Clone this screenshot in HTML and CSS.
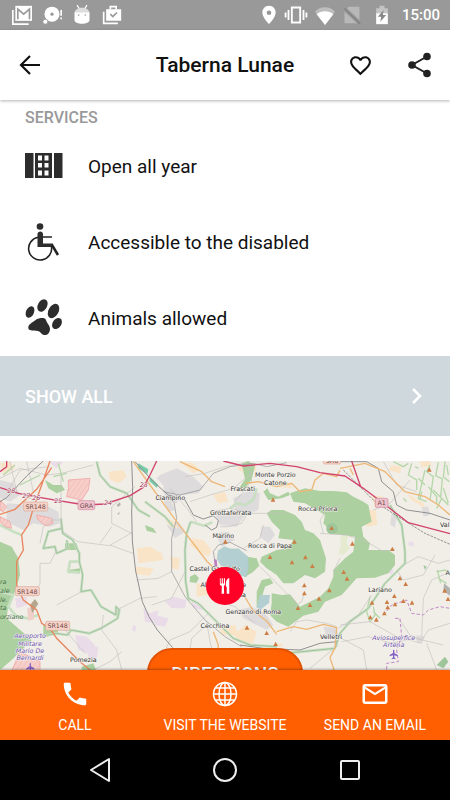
FILE: index.html
```html
<!DOCTYPE html>
<html lang="en">
<head>
    <meta charset="UTF-8">
    <meta name="viewport" content="width=device-width, initial-scale=1.0">
    <title>Taberna Lunae</title>
    <link rel="stylesheet" href="styles.css">
</head>
<body>
    <div class="status-bar">
        <div class="status-left">
            <svg class="status-icon" viewBox="0 0 24 24"><path fill="#fff" d="M0 6v18h20v-2H2V6z"/><path fill="#fff" d="M4 1h20v18H4z"/><path fill="none" stroke="#999" stroke-width="2" d="M7 17V5l7 6 7-6v12"/></svg>
            <svg class="status-icon" viewBox="0 0 24 24"><circle cx="12" cy="11" r="9" fill="#fff"/><circle cx="12" cy="11" r="2" fill="#999"/><circle cx="4" cy="20" r="3" fill="#fff" stroke="#999"/><path stroke="#fff" stroke-width="2" d="M23 6v7M23 15v2"/></svg>
            <svg class="status-icon" viewBox="0 0 24 24"><path stroke="#fff" stroke-width="1.500" d="M6 0l3 5M18 0l-3 5"/><path fill="#ddd" d="M3 10c0-9 18-9 18 0z"/><path fill="#fff" d="M3 9h18v9c0 6-18 6-18 0z"/><circle cx="8" cy="12" r="1" fill="#999"/><circle cx="16" cy="12" r="1" fill="#999"/></svg>
            <svg class="status-icon" viewBox="0 0 24 24"><path fill="#fff" d="M1 8v15h18v-2H3V8zM5 5h18v14H5z"/><path fill="none" stroke="#fff" stroke-width="2" d="M10 5V2h7v3"/><path fill="none" stroke="#999" stroke-width="2" d="M10 11l3 3 5-5"/></svg>
        </div>
        <div class="status-right">
            <svg class="status-icon" viewBox="0 0 24 24"><path fill="#fff" fill-rule="evenodd" d="M12 1C7.500 1 4 4.500 4 9c0 6 8 14 8 14s8-8 8-14c0-4.500-3.500-8-8-8zm0 5.500a2.800 2.800 0 1 1 0 5.600 2.800 2.800 0 0 1 0-5.600z"/></svg>
            <svg class="status-icon wide" viewBox="0 0 28 24"><path fill="none" stroke="#fff" stroke-width="2.200" d="M9 3h10v18H9zM5 6v12M1.500 9v6M23 6v12M26.500 9v6"/></svg>
            <svg class="status-icon wide" viewBox="0 0 28 24"><path fill="#bdbdbd" d="M14 24L2 8C8 1 20 1 26 8z"/><path fill="#fff" d="M14 24L4 11c6-4.500 14-4.500 20 0z"/></svg>
            <svg class="status-icon" viewBox="0 0 24 24"><path fill="#b8b8b8" d="M8 2h13v16L6 4zM3 8l15 14H3z"/><path stroke="#7d7d7d" stroke-width="1.500" d="M3 4l19 19"/></svg>
            <svg class="status-icon battery" viewBox="0 0 24 24"><path fill="#c4c4c4" d="M9 1h6v3h4v7H5V4h4z"/><path fill="#fff" d="M5 10h14v13H5z"/><path fill="#888" d="M14 6l-7 8h4l-1 6 7-8h-4z"/></svg>
            <span class="clock">15:00</span>
        </div>
    </div>

    <header class="header">
        <button class="icon-button" aria-label="Back">
            <svg width="24" height="24" viewBox="0 0 24 24"><path fill="none" stroke="#111" stroke-width="2.200" d="M22 12H3M12 3l-9 9 9 9"/></svg>
        </button>
        <h1>Taberna Lunae</h1>
        <div class="header-actions">
            <button class="icon-button" aria-label="Add to favourites">
                <svg width="25" height="25" viewBox="0 0 24 24"><path fill="#111" d="M16.500 3c-1.740 0-3.410.810-4.500 2.090C10.910 3.810 9.240 3 7.500 3 4.420 3 2 5.420 2 8.500c0 3.780 3.400 6.860 8.550 11.540L12 21.350l1.450-1.320C18.600 15.360 22 12.280 22 8.500 22 5.420 19.580 3 16.500 3zm-4.400 15.550l-.1.100-.1-.1C7.140 14.240 4 11.390 4 8.500 4 6.500 5.500 5 7.500 5c1.540 0 3.040.990 3.570 2.360h1.870C13.460 5.990 14.960 5 16.500 5c2 0 3.500 1.500 3.500 3.500 0 2.890-3.140 5.740-7.900 10.050z"/></svg>
            </button>
            <button class="icon-button" aria-label="Share">
                <svg width="26" height="26" viewBox="0 0 26 26"><path fill="none" stroke="#222" stroke-width="2" d="M20 4.500L5 13l15 8.500"/><circle cx="20" cy="4.500" r="3.800" fill="#222"/><circle cx="5" cy="13" r="3.800" fill="#222"/><circle cx="20" cy="21.500" r="3.800" fill="#222"/></svg>
            </button>
        </div>
    </header>

    <main class="content">
        <h2 class="section-title">SERVICES</h2>
        <ul class="services">
            <li>
                <svg class="service-icon" viewBox="0 0 38 38"><path fill="#2d2d2d" fill-rule="evenodd" d="M0 6h8.500v25H0zM29 6h8.500v25H29zM10 6h17v25H10zm3 2.500v5h4v-5zm6.500 0v5h4v-5zM13 16v4.500h4V16zm6.500 0v4.500h4V16zM13 23.500v5h4v-5zm6.500 0v5h4v-5z"/></svg>
                <span>Open all year</span>
            </li>
            <li>
                <svg class="service-icon" viewBox="0 0 38 38"><circle cx="15" cy="3.500" r="3.300" fill="#2d2d2d"/><path fill="#2d2d2d" d="M12.500 11c0-3.500 5.500-3.500 5.500 0v9.500h10V24H12.500z"/><path fill="none" stroke="#222" stroke-width="1.600" d="M18 14h9M13 14.200a11.500 11.500 0 1 0 13.500 9.500"/><path stroke="#222" stroke-width="2.500" d="M27 22l6 10"/></svg>
                <span>Accessible to the disabled</span>
            </li>
            <li>
                <svg class="service-icon" viewBox="0 0 38 38"><g fill="#2d2d2d"><ellipse cx="5" cy="13" rx="4" ry="6" transform="rotate(25 5 13)"/><ellipse cx="17.500" cy="6.500" rx="4.600" ry="6.600" transform="rotate(30 17.500 6.500)"/><ellipse cx="28.500" cy="12" rx="5" ry="7.700" transform="rotate(30 28.500 12)"/><ellipse cx="32" cy="24.500" rx="4.300" ry="6" transform="rotate(35 32 24.500)"/><path d="M12 20c3-1 8-2 9 1 1 4 4 5 4 9 0 6-6 8-9 4-3-4-11-1-12.500-4-1.500-5 4-6 8.500-10z"/></g></svg>
                <span>Animals allowed</span>
            </li>
        </ul>

        <button class="show-all">
            <span>SHOW ALL</span>
            <svg width="12" height="18" viewBox="0 0 12 18"><path fill="none" stroke="#fff" stroke-width="2.500" d="M2 2l7 7-7 7"/></svg>
        </button>

        <section class="map" aria-label="Map">
            <svg class="map-canvas" viewBox="0 18 1350 780" preserveAspectRatio="xMidYMin slice">
                <defs>
                    <path id="peak" fill="#cb7d43" d="M0-7l7 13H-7z"/>
                    <path id="plane" fill="#8461c4" d="M-2-12q2-4 4 0v8l10 6v4l-10-3v6l4 4v2l-6-2-6 2v-2l4-4V3l-10 3V2l10-6z"/>
                    <pattern id="hatch" width="12" height="12" patternUnits="userSpaceOnUse" patternTransform="rotate(35)"><path fill="#f6cfca" d="M0 0h12v12H0z"/><path stroke="#f0a29f" stroke-width="2" d="M0 0v12"/></pattern>
                </defs>
                <rect y="18" width="1350" height="780" fill="#f1eee8"/>

                <!-- built-up areas -->
                <g fill="#dddbdc">
                    <path d="M20 145l70 5 45 0 40 20 5 35-30 10-50-10-30 20-50-25z"/>
                    <path d="M480 60l50-20 50 25 30 30-15 20-50 5-15 25-35-10-5-45-20-20zM490 135l25 5 10 25-20 5zM500 210l35-10 20 30-30 20z"/>
                    <path d="M700 130l50-25 30 10-5 50-40 15-30-15zM640 165l45 10 50 5-25 35-50-5zM645 235l40-5 20 25-40 20zM785 215l25 0 15 25-20 25-25-20zM715 465l40-10 40 20 25 35-20 15-40-20-30-15zM970 515l40 5 5 20-35 5zM0 75l40 10 20 35-30 20-30-10z"/>
                    <path d="M1175 175l15 5-5 38-15-10zM1265 155l20 0 5 25-20 5zM1250 540l25 5-10 20-15-5z"/>
                </g>
                <g fill="#fae4c8">
                    <path d="M0 25l30-5 15 20-35 20zM325 50l45-5 10 20-25 20-25-10zM410 280l40-5 35 20 5 20-75 10zM410 335l50 5-10 22-45-5zM490 185l35 15 10 20-25-5zM575 250l35 5 25 30-10 20-20-10-35-25zM590 385l30 5 5 30-35 5zM650 500l20 15 35-5 10 30-50 0zM540 20l40 5 20 20-20 10zM640 120l35-10 10 30-30 5zM510 305l30 5-5 35-20-5z"/>
                    <path d="M710 40l25-20 30 5 5 20-30 15zM830 75l45 10 0 15-40-5zM1065 145l35 5 5 25-20 10-20-20zM1105 165l22 0 5 45-32 5-5-25zM1115 120l35 5 0 30-25 5zM1175 30l30 5-5 20-35-10zM1220 115l50 30 5 15-40-25zM1260 20l30-2 5 15-30 5zM700 540l35-30 35 20-10 35-30 0zM800 575l45-10 0 10-40 5z"/>
                </g>
                <g fill="#e9dbe8">
                    <path d="M225 540l35 5 25 25-10 30-40-15zM265 575l30 0-5 35-25 0zM430 460l20 15 25-10-5 40-35-5zM465 480l40 10-10 25-30-5zM495 440l25-15 40 10-5 25-40 0zM400 510l10 5-5 15-10-5zM575 440l35 10 0 15-30-5zM45 430l35-5 0 25-30 10zM145 20l45 0-20 20zM1225 260l15 0 0 15-15-5zM1160 335l20 10-5 15-15-10z"/>
                </g>

                <!-- woods -->
                <g fill="#acd09f">
                    <path d="M0 260l35 15 20 35 5 50-15 50-20 40-5 40 75 65-60 60-35 30z"/>
                    <path d="M135 75l25 15 25 0 10 15-25 10-25-15zM195 265l35 0 5 20-40 0zM205 345l35-5 0 12-35 3zM130 510l40 0 5 25-45 5z"/>
                    <path d="M725 25l20-7 20 15-10 40-25 35-15-5 20-30z"/>
                    <path d="M815 165l35 0 35 15 20 20 10 25 25 10 20 20 18 55-3 40-30 20-30-10-35 25-30 0-20-25-30-20-20-20 5-15 45-20 35-5 15-25-45-5 5-25-25-25-15-25z"/>
                    <path d="M742 305l28 5 8 22-20 20-25 15 10-45zM770 410l15-35 25-5 10 15-25 10-15 50-10 15zM815 415l30 5 25-2 30 37 60-30 25-25 15-35 0-20 35-35 25-20 5-45-65-8-30-32 5-25-25-15-35-20-35-5-10-25 45-15 45 8 40 0 40 4 20 13 30 15 15 10 10 50-30 15 5 30 20 20-5 20 60 0 20 15 0 30-20 25-40 13-55 2-45 50-50 20-20 30-45 12-45 33-35-15-20-20 5-35z"/>
                    <path d="M790 110l12-10 8 15 25 10 30-15 5 10-25 10-40 5zM570 365l15-8 12 12-8 15-20-3zM245 635l35-10 10 25-45 0zM435 210l25 10 10 15-30-8z"/>
                    <path fill="#78cba9" d="M415 25l30 18-3 15-30-20zM450 65l25 25-5 8-22-20z"/>
                </g>
                <path fill="#e4ebce" d="M1020 245l25-5-5 25 10 15-20 20-15-5 8-25z"/>
                <g fill="#9fc69b">
                    <circle cx="996" cy="221" r="17"/><path d="M1310 630l25-25 10 15-15 20zM1270 330l10 5-5 10z"/>
                </g>
                <g fill="none" stroke="#b5d7a9" stroke-width="4">
                    <path d="M1235 25l-10 35 25 15 0 30M1255 70l20 20M1275 45l-20 85 25 10M1290 30l-10 20 20 15-10 70M1315 22l-8 40 20 10-5 55M1335 20l-5 45 18 15M1300 105l45 45M1110 425l-10 45 10 30 15-20-5-25M1120 470l20 20M1310 350l25-5 15 10M1315 370l25 15M1312 345l10 40"/>
                    <path d="M1330 100l15 45M1245 35l10 5M1210 130l10 10M10 60l35-30M60 90l60-30M175 25l15 55M160 65l40-10"/>
                    <path d="M1180 20l30 15 15-10M1265 110l-5 25M1285 95l25 30 0 20M1325 130l-15 30M1340 30l5 30"/>
                </g>

                <!-- lakes -->
                <path fill="#b4cfd1" stroke="#a9c8c8" stroke-width="2" d="M655 287l18-12 18 7 25 0 27 23 2 30-6 30-20-5-15-15-20-10-20-3-12-20z"/>
                <path fill="#b4cfd1" d="M780 420l30 0-3 25-15 10-12 12-10-12z"/>

                <!-- green park boundaries -->
                <g fill="none" stroke="#c8dfc2" stroke-width="8" stroke-linejoin="round">
                    <path d="M183 190l5 45 30 20 20 40 0 25 10 40-5 50 30-5 30 50 45 25 0-25 10 10-5 25-50 30-35 15-55-10-10 15-35-5-45 10"/>
                    <path d="M185 220l-40 10-15 50 35-5 5 20 35-15-5-25M235 320l-25 0-5 30 35 3M290 20l10 40 30 35 50 20 35 50 35 20M435 140l60 45 25 30"/>
                    <path d="M572 200l-12 35-5 50 2 95 8 50 30 15 45 45 60 60 50 20 80 5M0 410l40 10-15 35 25 30 35 5 30-10M0 210l40 20 25 10M572 200l40 12 25-10M1170 150l35 60 10 80 0 35-60 60-50 75-55 40-30 35-15 45-150 15M690 160l20-15 25 5 25-15 10-35"/>
                </g>
                <g fill="none" stroke="#8db58c" stroke-width="2">
                    <path d="M183 190l5 45 30 20 20 40 0 25 10 40-5 50 30-5 30 50 45 25 0-25 10 10-5 25-50 30-35 15-55-10-10 15-35-5-45 10M185 220l-40 10-15 50 35-5 5 20 35-15-5-25M290 20l10 40 30 35 50 20 35 50 35 20M435 140l60 45 25 30"/>
                    <path d="M572 200l-12 35-5 50 2 95 8 50 30 15 45 45 60 60 50 20 80 5M1170 150l35 60 10 80 0 35-60 60-50 75-55 40-30 35-15 45-150 15"/>
                </g>

                <path fill="url(#hatch)" stroke="#ee9b98" stroke-width="2" d="M205 75l65-5-5 35-20 30-45-10 5-25zM110 180l45 10 3 15-20 8-25-20zM0 135l20 20-10 15-10-5zM0 185l30 15 5 20-20-5-15-15zM60 590l60 30 0 28-85 0z"/>
                <path fill="#f1cfc9" d="M82 460l20-5 0 38-18 4z"/><path fill="#b5a78d" d="M90 450l15-18 10 14-18 28z"/>

                <!-- minor roads -->
                <g fill="none" stroke="#c4c2bf" stroke-width="2">
                    <path d="M0 70l60-30 80 20 45-5 95-25M30 20l20 90 60 30M80 20l20 90M20 115l40-70 90-10M183 60l0 165 50 35 95 12 70-40M185 195l-30 0-25 20-10 50M395 235l-60-30 0-50 70-60M300 265l35-50M330 270l40 15 30 10M170 285l-20 40-30 0 0 60-20 40M245 410l-75 40M340 480l20-20 60-30 50-5M310 480l-5 45 45 60 15 60M365 590l-35 30-50 25M150 500l45 25 60 70M410 375l65-5 40-20"/>
                    <path d="M455 450l60-20 40-80M470 645l40-90 60-25 60-60M510 100l50 60 30 40M555 65l60-10 60-20 60-10M570 140l60-20 70-20 60-50M640 170l50-10 60 15 110 0M660 215l25 0 40-10 20-35M780 335l110 110M645 340l20 40M620 400l40 40 45 15 60 50M620 500l10 60 20 75M625 505l-50 45-15 95M730 280l50-30 10-40M745 20l10 60-50 60M970 235l-10-40 20-30 60-20M960 235l80 5 60 20 50 30 35-8M1000 350l20-40M915 410l-10 30-35 25M870 530l20-30 30-5 60 10 30 10M1020 510l90-10 80 45 75 20M1015 520l60-40 40-60M1025 560l80-15 70 20 70-15 85 20M1210 330l45-25 60 20 35-10M1190 345l20 30 60-15 35-60M1265 545l5-115 25-55 45-20M1195 490l35 50 35 15 20-30 65-20M1280 565l30 80M1100 645l-10-60-75-40M1015 570l-85 70M1120 165l50-20 60-70M1150 20l40 70 60 20"/>
                </g>

                <!-- railways -->
                <g fill="none" stroke="#909090" stroke-width="3" stroke-linejoin="round">
                    <path d="M395 18l3 80-3 70 2 90 10 90 20 92 20 45 25 40 46 53M130 18l-50 45-60 65-20 12"/>
                    <path d="M405 20l55 60 45 40 50 15 25 45 30 12 30-10 15 15-5 20-15 8-20-15"/>
                    <path stroke-width="2" d="M520 130l10 60-15 60 0 100 40 75 60 70 60 50 50 30"/>
                    <path stroke-width="2" d="M490 110l50 10 60-15 40-50 50-20 70-10 40 10 60-12M645 320l-5-30 15-20 35-8 50 25"/>
                    <path d="M1020 20l80 0 35 20 10 40 35 30 10 40 30 15 70 10 60 20M720 570l70 10 110 5 60-20 50-5"/>
                </g>
                <path fill="none" stroke="#666" stroke-width="2" stroke-dasharray="8 3" d="M1030 45l95 95 85 55 65 40 80 35"/>

                <!-- main roads -->
                <g fill="none" stroke="#edb877" stroke-width="4" stroke-linejoin="round">
                    <path d="M400 20l50 70 80 110 90 118 40 40 70 60 30 50 40 30 30 40M540 20l65 30 30 30 40 15M830 530l50-15 40 8 50-15 40 10-5 60-15 30 15 45M640 530l15 40-5 70M1060 60l-10-20M1020 45l-10 20-40-10-25 20-10 30-35 5-25-25-45 10-55-15-40 5M1020 40l75-15 60 25 60 60 60 15 40 25 35 30"/>
                </g>
                <g fill="none" stroke="#e9865e" stroke-width="4"><path d="M0 178l45-15 65-60 45-65M150 18l-25 72-25 70-15 50-20 30 5 45-20 35 0 70 20 45 40 30 15 40 25 15 20 30 70 70 60 50"/></g>
                <g fill="none" stroke="#d1426d" stroke-width="4" stroke-linejoin="round">
                    <path d="M0 98l55 17 80 15 120 20 60-3 75-25 40-25 20-37 20-42M0 50l20-15 0-17"/>
                    <path d="M670 18l60 15 80-8 80 10 70 18 75 10 55 37 60 45 75 58 125 33M1055 18l27 77"/>
                </g>
                <g fill="none" stroke="#c188c8" stroke-width="3" stroke-dasharray="10 6">
                    <path d="M1150 480l25-30 45-15 15 40 35 5 15-15 35-10 30 5M1185 490l15 0 5 55-15 40 5 35-35 5 0 20"/>
                </g>
                <g fill="#b2b2b0"><path d="M1332 385l18 15 0 22-20-15zM350 150l10-8 2 8-8 6zM352 175l8-3-4 8z"/></g>
                <path fill="#b97fc0" d="M642 312l8 2 2 20-8 4z"/>

                <!-- road shields -->
                <g class="shield">
                    <rect x="71" y="141" width="72" height="27" rx="4"/><text x="107" y="162">SR148</text>
                    <rect x="46" y="395" width="72" height="27" rx="4"/><text x="82" y="416">SR148</text>
                    <rect x="137" y="499" width="72" height="27" rx="4"/><text x="173" y="520">SR148</text>
                    <rect x="970" y="0" width="52" height="27" rx="4"/><text x="996" y="24">SR6</text>
                    <rect class="motorway" x="234" y="137" width="50" height="27" rx="4"/><text x="259" y="158">GRA</text>
                    <rect class="motorway" x="1126" y="130" width="38" height="27" rx="4"/><text x="1145" y="150">A1</text>
                </g>
                <g class="exit">
                    <text x="34" y="114">28</text><text x="79" y="129">27</text><text x="109" y="134">26</text>
                    <text x="175" y="145">25</text><text x="324" y="151">24</text><text x="431" y="97">23</text>
                </g>

                <!-- peaks -->
                <use href="#peak" x="819" y="134"/><use href="#peak" x="676" y="260"/><use href="#peak" x="883" y="260"/>
                <use href="#peak" x="810" y="306"/><use href="#peak" x="876" y="322"/><use href="#peak" x="894" y="459"/>
                <use href="#peak" x="741" y="518"/><use href="#peak" x="800" y="534"/><use href="#peak" x="827" y="567"/>
                <use href="#peak" x="995" y="219"/><use href="#peak" x="1057" y="266"/><use href="#peak" x="916" y="307"/>
                <use href="#peak" x="937" y="333"/><use href="#peak" x="1031" y="351"/><use href="#peak" x="1041" y="371"/>
                <use href="#peak" x="913" y="391"/><use href="#peak" x="913" y="415"/><use href="#peak" x="988" y="406"/>
                <use href="#peak" x="957" y="431"/><use href="#peak" x="930" y="450"/><use href="#peak" x="1288" y="44"/>
                <use href="#peak" x="1177" y="282"/><use href="#peak" x="1200" y="370"/><use href="#peak" x="1217" y="387"/>
                <use href="#peak" x="1183" y="423"/><use href="#peak" x="1161" y="441"/><use href="#peak" x="1185" y="448"/>
                <use href="#peak" x="1210" y="438"/><use href="#peak" x="1236" y="443"/><use href="#peak" x="1163" y="457"/>
                <use href="#peak" x="1153" y="475"/><use href="#peak" x="1116" y="443"/><use href="#peak" x="1111" y="487"/>
                <use href="#peak" x="1129" y="494"/><use href="#peak" x="1334" y="407"/><use href="#peak" x="1344" y="432"/>
                <use href="#plane" x="91" y="638"/><use href="#plane" x="1181" y="598"/>

                <!-- place names -->
                <g class="place">
                    <text x="511" y="136">Ciampino</text>
                    <text x="728" y="107">Frascati</text>
                    <text x="826" y="65">Monte Porzio</text>
                    <text x="826" y="89">Catone</text>
                    <text x="692" y="179">Grottaferrata</text>
                    <text x="670" y="248">Marino</text>
                    <text x="810" y="280">Rocca di Papa</text>
                    <text x="953" y="169">Rocca Priora</text>
                    <text x="644" y="347">Castel Gandolfo</text>
                    <text x="670" y="397">Albano Laziale</text>
                    <text x="706" y="427">Ariccia</text>
                    <text x="760" y="477">Genzano di Roma</text>
                    <text x="645" y="518">Cecchina</text>
                    <text x="1140" y="411">Lariano</text>
                    <text x="993" y="552">Velletri</text>
                    <text x="250" y="622">Pomezia</text>
                    <text x="1334" y="215">Val</text>
                    <text x="1343" y="361">A</text>
                </g>
                <g class="airport">
                    <text x="90" y="550">Aeroporto</text>
                    <text x="90" y="572">Militare</text>
                    <text x="90" y="594">Mario De</text>
                    <text x="90" y="616">Bernardi</text>
                    <text x="1181" y="555">Aviosuperfice</text>
                    <text x="1181" y="577">Artena</text>
                </g>
                <g class="reserve">
                    <text x="0" y="388">ra</text>
                    <text x="0" y="414">ale</text>
                    <text x="0" y="440">le.</text>
                    <text x="0" y="466">ta</text>
                    <text x="0" y="492">orziano</text>
                </g>
            </svg>
            <button class="pin" aria-label="Restaurant">
                <svg width="12" height="18" viewBox="0 0 14 20"><path fill="#fff" d="M1 1h1v6h1.200V1h1.300v6h1.200V1H7v7c0 1-.8 1.500-1.300 2l.3 9H3l.3-9C2 9.500 1 9 1 8zM8 8c0-4 1.500-7 4-7v18H9V11H8z"/></svg>
            </button>
            <button class="directions">DIRECTIONS</button>
        </section>
    </main>

    <nav class="contact-bar">
        <a href="#call">
            <svg width="30" height="30" viewBox="0 0 24 24"><path fill="#fff" d="M6.620 10.790c1.440 2.830 3.760 5.140 6.590 6.590l2.200-2.200c.270-.270.670-.360 1.020-.240 1.120.370 2.330.570 3.570.570.550 0 1 .450 1 1V20c0 .550-.450 1-1 1-9.390 0-17-7.610-17-17 0-.550.450-1 1-1h3.500c.550 0 1 .450 1 1 0 1.250.200 2.450.570 3.570.110.350.030.740-.250 1.020l-2.200 2.200z"/></svg>
            <span>CALL</span>
        </a>
        <a href="#website">
            <svg width="30" height="30" viewBox="0 0 30 30"><g fill="none" stroke="#fff" stroke-width="1.500"><circle cx="15" cy="15" r="11.500"/><ellipse cx="15" cy="15" rx="6" ry="11.500"/><path d="M15 3.500v23M3.500 15h23M5.500 9h19M5.500 21h19"/></g></svg>
            <span>VISIT THE WEBSITE</span>
        </a>
        <a href="#email">
            <svg width="30" height="30" viewBox="0 0 24 24"><path fill="#fff" d="M20 4H4c-1.100 0-2 .9-2 2v12c0 1.100.9 2 2 2h16c1.100 0 2-.9 2-2V6c0-1.100-.9-2-2-2zm0 14H4V8l8 5 8-5v10zm-8-7L4 6h16l-8 5z"/></svg>
            <span>SEND AN EMAIL</span>
        </a>
    </nav>

    <div class="system-nav">
        <button aria-label="System back"><svg width="26" height="26" viewBox="0 0 26 26"><path fill="none" stroke="#eee" stroke-width="2" stroke-linejoin="round" d="M22 2v22L4 13z"/></svg></button>
        <button aria-label="Home"><svg width="26" height="26" viewBox="0 0 26 26"><circle cx="13" cy="13" r="11" fill="none" stroke="#eee" stroke-width="2"/></svg></button>
        <button aria-label="Recent apps"><svg width="26" height="26" viewBox="0 0 26 26"><rect x="4" y="4" width="18" height="18" rx="1" fill="none" stroke="#eee" stroke-width="2"/></svg></button>
    </div>
</body>
</html>
```

FILE: styles.css
```css
* {
    box-sizing: border-box;
}

body {
    margin: 0;
    height: 100vh;
    display: flex;
    flex-direction: column;
    font-family: Roboto, sans-serif;
    color: #111;
    background: #fff;
    overflow: hidden;
}

button {
    padding: 0;
    border: none;
    background: none;
    font-family: inherit;
    cursor: pointer;
}

svg {
    display: block;
}

/* Status bar */
.status-bar {
    flex: none;
    height: 30px;
    padding: 0 10px 0 12px;
    display: flex;
    justify-content: space-between;
    align-items: center;
    background: #999;
}

.status-left,
.status-right {
    display: flex;
    align-items: center;
}

.status-left {
    gap: 10px;
}

.status-right {
    gap: 5px;
}

.status-icon {
    width: 20px;
    height: 20px;
}

.status-icon.wide {
    width: 24px;
}

.battery {
    margin-left: 5px;
}

.clock {
    margin-left: 5px;
    font-size: 15px;
    font-weight: 500;
    color: #fff;
}

/* Header */
.header {
    flex: none;
    height: 70px;
    padding: 0 15px;
    display: grid;
    grid-template-columns: 1fr auto 1fr;
    align-items: center;
    background: #fff;
    box-shadow: 0 1px 3px rgba(0,0,0,0.3);
    z-index: 1;
}

.header h1 {
    margin: 0;
    font-size: 21px;
    line-height: 30px;
    font-weight: 500;
}

.header-actions {
    display: flex;
    justify-content: flex-end;
    gap: 30px;
}

.icon-button {
    width: 30px;
    height: 30px;
    display: flex;
    align-items: center;
    justify-content: center;
}

/* Services */
.content {
    flex: 1;
    min-height: 0;
    overflow: hidden;
}

.section-title {
    margin: 0;
    padding: 8px 25px 0;
    height: 28px;
    font-size: 16px;
    line-height: 20px;
    font-weight: 500;
    color: #999;
}

.services {
    margin: 0;
    padding: 0;
    list-style: none;
}

.services li {
    height: 76px;
    padding: 0 25px;
    display: flex;
    align-items: center;
    gap: 25px;
    font-size: 19px;
}

.service-icon {
    width: 38px;
    height: 38px;
    overflow: visible;
}

.show-all {
    width: 100%;
    height: 80px;
    padding: 0 27px 0 25px;
    display: flex;
    align-items: center;
    justify-content: space-between;
    background: #cfd8dd;
    color: #fff;
    font-size: 18px;
    font-weight: 500;
}

/* Map */
.map {
    position: relative;
    height: 260px;
    margin-top: 25px;
    overflow: hidden;
    background: #f1eee8;
}

.map-canvas {
    width: 100%;
    height: 100%;
}

.map-canvas text {
    font-family: "DejaVu Sans", sans-serif;
    font-size: 19px;
    text-anchor: middle;
    paint-order: stroke;
    stroke: #f5f3ee;
    stroke-width: 3px;
    fill: #333;
}

.shield rect {
    fill: #f5d3c8;
    stroke: #dba99a;
    stroke-width: 2px;
}

.shield .motorway {
    fill: #eec2cc;
    stroke: #d08b9f;
}

.map-canvas .shield text {
    stroke: none;
    fill: #754b48;
}

.map-canvas .exit text {
    fill: #a33559;
    font-style: italic;
}

.map-canvas .airport text {
    fill: #6f55b0;
    font-style: italic;
}

.map-canvas .reserve text {
    fill: #46704b;
    font-style: italic;
    text-anchor: start;
    stroke: none;
}

.pin {
    position: absolute;
    top: 106px;
    left: 50%;
    width: 38px;
    height: 38px;
    margin-left: -19px;
    display: flex;
    align-items: center;
    justify-content: center;
    border-radius: 50%;
    background: #ff0026;
}

.directions {
    position: absolute;
    bottom: 23px;
    left: 50%;
    width: 156px;
    height: 50px;
    margin-left: -78px;
    border: 2px solid #e25200;
    border-radius: 25px;
    background: #ff5f00;
    color: #fff;
    font-size: 19px;
    font-weight: 500;
}

/* Contact bar */
.contact-bar {
    flex: none;
    height: 70px;
    display: grid;
    grid-template-columns: repeat(3, 1fr);
    background: #ff5f00;
    box-shadow: 0 -1px 2px rgba(0,0,0,0.3);
    z-index: 1;
}

.contact-bar a {
    padding-top: 9px;
    display: flex;
    flex-direction: column;
    align-items: center;
    gap: 8px;
    color: #fff;
    font-size: 14px;
    line-height: 16px;
    text-decoration: none;
}

/* System navigation */
.system-nav {
    flex: none;
    height: 60px;
    display: flex;
    align-items: center;
    justify-content: center;
    gap: 99px;
    background: #000;
}
```
